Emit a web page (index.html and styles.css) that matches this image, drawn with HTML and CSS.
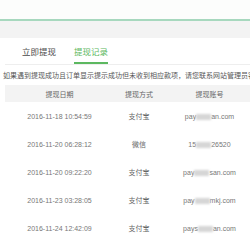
FILE: index.html
```html
<!DOCTYPE html>
<html>
    <head>
        <meta charset="utf-8">
        <title>提现记录</title>
        <link rel="stylesheet" href="styles.css">
    </head>
    <body>
        <div class="topbar"></div>
        <div class="band"></div>

        <div class="panel">
            <div class="tabs">
                <div class="tab">立即提现</div>
                <div class="tab active">提现记录</div>
            </div>

            <p class="notice">如果遇到提现成功且订单显示提示成功但未收到相应款项，请您联系网站管理员客服处理</p>

            <div class="records">
                <div class="row head">
                    <span>提现日期</span>
                    <span>提现方式</span>
                    <span>提现账号</span>
                </div>
                <div class="row">
                    <span>2016-11-18 10:54:59</span>
                    <span class="way">支付宝</span>
                    <span>pay<i class="mask"></i>an.com</span>
                </div>
                <div class="row">
                    <span>2016-11-20 06:28:12</span>
                    <span class="way">微信</span>
                    <span>15<i class="mask"></i>26520</span>
                </div>
                <div class="row">
                    <span>2016-11-20 09:22:20</span>
                    <span class="way">支付宝</span>
                    <span>pay<i class="mask"></i>san.com</span>
                </div>
                <div class="row">
                    <span>2016-11-23 03:28:05</span>
                    <span class="way">支付宝</span>
                    <span>pay<i class="mask"></i>mkj.com</span>
                </div>
                <div class="row">
                    <span>2016-11-24 12:42:09</span>
                    <span class="way">支付宝</span>
                    <span>pays<i class="mask"></i>an.com</span>
                </div>
            </div>
        </div>
    </body>
</html>
```

FILE: styles.css
```css
body {
    margin: 0;
    width: 250px;
    height: 250px;
    overflow: hidden;
    background-color: #fff;
    font-family: "Liberation Sans", "Noto Sans CJK SC", sans-serif;
}
.topbar {
    height: 19px;
    background-color: #fcfdfc;
    border-bottom: 2px solid #a7d8be;
}
.band {
    height: 17px;
    background-color: #f3f3f3;
}
.panel {
    background-color: #fff;
}
.tabs {
    display: flex;
    gap: 18px;
    margin-left: 5px;
    padding-left: 17px;
    border-bottom: 1px solid #eeeeee;
}
.tab {
    padding-top: 9px;
    padding-bottom: 5px;
    line-height: 10px;
    font-size: 8.5px;
    color: #4a4a4a;
    border-bottom: 2px solid transparent;
}
.tab.active {
    color: #5cb860;
    border-bottom-color: #5cb860;
}
.notice {
    margin: 6px 0 4px 0;
    padding-left: 3px;
    line-height: 10px;
    font-size: 7px;
    color: #555;
    white-space: nowrap;
    overflow: hidden;
}
.records {
    margin-left: 5px;
    width: 260px;
}
.row {
    display: grid;
    grid-template-columns: 109px 50px 91px;
    height: 28px;
    align-items: center;
    font-size: 7px;
    color: #777;
}
.row span {
    text-align: center;
    white-space: nowrap;
}
.row .way {
    color: #666;
}
.row.head {
    height: 17px;
    background-color: #f3f3f3;
    color: #666;
}
.mask {
    display: inline-block;
    width: 15px;
    height: 6px;
    background-color: #d6d6d6;
    filter: blur(1px);
    vertical-align: -1px;
}
```
